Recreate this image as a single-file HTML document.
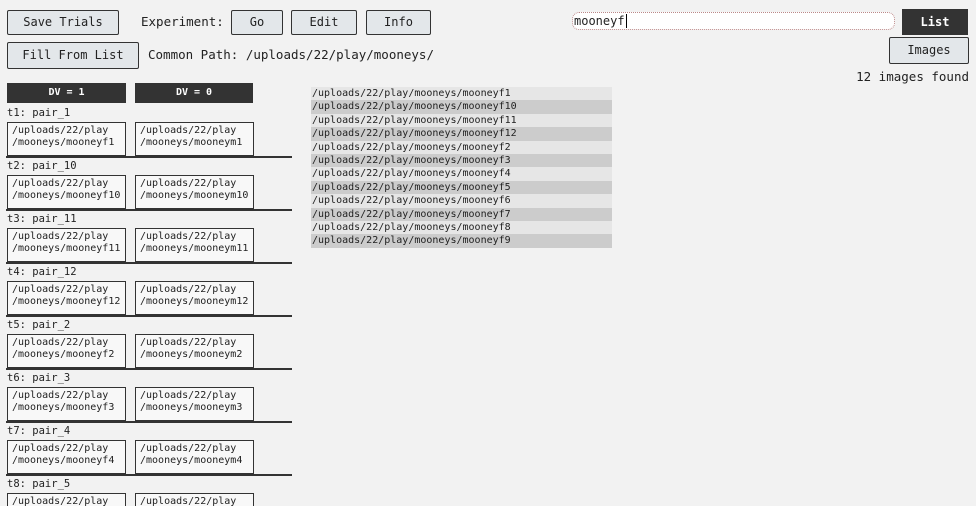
<!DOCTYPE html>
<html style="overflow:hidden;width:976px;height:506px"><head><style>
body{margin:0;background:#f2f2f2;font-family:"DejaVu Sans Mono","Liberation Mono",monospace;color:#222;width:976px;height:506px;overflow:hidden;position:relative}
.a{position:absolute}
.btn{position:absolute;box-sizing:border-box;border:1px solid #333;border-radius:2px;background:#e3e7ea;font-size:12px;text-align:center}
.hd{position:absolute;top:83px;height:20px;background:#333;color:#fff;font-size:10px;font-weight:bold;text-align:center;line-height:20px}
.lb{position:absolute;left:7px;font-size:10.5px}
.bx{position:absolute;box-sizing:border-box;border:1px solid #333;background:#f8f8f8;font-size:10px;line-height:12px;padding:2px 0 0 4px;height:34px;width:119px;white-space:pre}
.ln{position:absolute;left:6px;width:286px;height:2px;background:#333}
.row{position:absolute;left:311px;width:301px;height:13.4px;font-size:10px;line-height:13px;padding-left:1px;box-sizing:border-box}
</style></head><body>
<div class="btn" style="left:7px;top:10px;width:112px;height:25px;line-height:23px">Save Trials</div>
<div class="a" style="left:141px;top:14px;font-size:12.5px">Experiment:</div>
<div class="btn" style="left:231px;top:10px;width:52px;height:25px;line-height:23px">Go</div>
<div class="btn" style="left:291px;top:10px;width:66px;height:25px;line-height:23px">Edit</div>
<div class="btn" style="left:366px;top:10px;width:65px;height:25px;line-height:23px">Info</div>
<div class="btn" style="left:7px;top:42px;width:132px;height:27px;line-height:25px">Fill From List</div>
<div class="a" style="left:148px;top:47px;font-size:12.5px">Common Path: /uploads/22/play/mooneys/</div>
<div class="a" style="left:572px;top:12px;width:323px;height:18px;box-sizing:border-box;background:#fff;border:1px dotted #b88;border-radius:7px;font-size:12px;line-height:16px;padding-left:1px">mooneyf<span style="border-left:1px solid #000;margin-left:1px"></span></div>
<div class="a" style="left:902px;top:9px;width:66px;height:26px;background:#333;color:#fff;font-size:12px;font-weight:bold;text-align:center;line-height:27px">List</div>
<div class="btn" style="left:889px;top:37px;width:80px;height:27px;line-height:25px">Images</div>
<div class="a" style="right:7px;top:69px;font-size:12.5px">12 images found</div>
<div class="hd" style="left:7px;width:119px">DV = 1</div>
<div class="hd" style="left:135px;width:118px">DV = 0</div>
<div id="t"></div>
<div id="l"></div>
<script>
var p=["1","10","11","12","2","3","4","5"],h="";
for(var i=0;i<8;i++){var y=106+i*53;
h+='<div class="lb" style="top:'+(y+1)+'px">t'+(i+1)+': pair_'+p[i]+'</div>';
h+='<div class="bx" style="left:7px;top:'+(y+16)+'px">/uploads/22/play\n/mooneys/mooneyf'+p[i]+'</div>';
h+='<div class="bx" style="left:135px;top:'+(y+16)+'px">/uploads/22/play\n/mooneys/mooneym'+p[i]+'</div>';
h+='<div class="ln" style="top:'+(y+50)+'px"></div>';}
document.getElementById('t').innerHTML=h;
var q=["1","10","11","12","2","3","4","5","6","7","8","9"];h="";
for(var j=0;j<12;j++){h+='<div class="row" style="top:'+(87+j*13.4)+'px;background:'+(j%2?'#cccccc':'#e6e6e6')+'">/uploads/22/play/mooneys/mooneyf'+q[j]+'</div>';}
document.getElementById('l').innerHTML=h;
</script>
</body></html>
